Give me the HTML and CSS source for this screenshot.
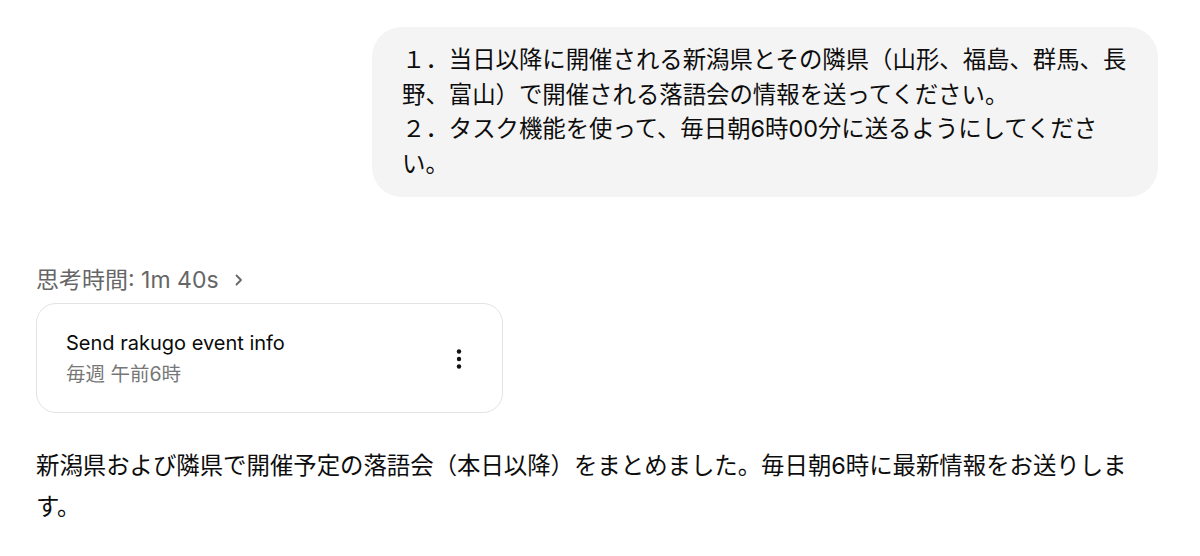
FILE: index.html
```html
<!DOCTYPE html>
<html lang="ja">
<head>
<meta charset="utf-8">
<link rel="stylesheet" href="styles.css">
</head>
<body>
<main class="chat">
  <div class="user-row">
    <div class="bubble">１．当日以降に開催される新潟県とその隣県（山形、福島、群馬、長野、富山）で開催される落語会の情報を送ってください。<br>２．タスク機能を使って、毎日朝6時00分に送るようにしてください。</div>
  </div>
  <div class="thinking">思考時間: 1m 40s <svg class="chev" width="12" height="14" viewBox="0 0 12 14"><path d="M3.5 2.5 L8 7 L3.5 11.5" fill="none" stroke="#666" stroke-width="1.8" stroke-linecap="round" stroke-linejoin="round"/></svg></div>
  <div class="task-card">
    <div class="task-info">
      <div class="task-title">Send rakugo event info</div>
      <div class="task-sub">毎週 午前6時</div>
    </div>
    <svg class="kebab" width="20" height="24" viewBox="0 0 20 24"><circle cx="10" cy="4.5" r="2.2" fill="#111"/><circle cx="10" cy="12" r="2.2" fill="#111"/><circle cx="10" cy="19.5" r="2.2" fill="#111"/></svg>
  </div>
  <p class="answer">新潟県および隣県で開催予定の落語会（本日以降）をまとめました。毎日朝6時に最新情報をお送りします。</p>
</main>
</body>
</html>
```
FILE: styles.css
```css
html, body {
  margin: 0;
  padding: 0;
  background: #ffffff;
}
body {
  font-family: Inter, "Noto Sans CJK JP", sans-serif;
  color: #0d0d0d;
}
.chat {
  padding: 27px 0 0 36px;
  width: 1200px;
  box-sizing: border-box;
}
.user-row {
  display: flex;
  justify-content: flex-end;
  padding-right: 42px;
}
.bubble {
  width: 786px;
  box-sizing: border-box;
  background: #f4f4f4;
  border-radius: 30px;
  padding: 16px 28px 16px 30px;
  font-size: 23.4px;
  line-height: 34.5px;
  color: #0d0d0d;
}
.thinking {
  margin-top: 68px;
  font-size: 23px;
  line-height: 30px;
  color: #666666;
  display: flex;
  align-items: center;
  gap: 8px;
}
.chev {
  margin-left: 6px;
}
.task-card {
  margin-top: 8px;
  width: 467px;
  box-sizing: border-box;
  border: 1px solid #e3e3e3;
  border-radius: 20px;
  padding: 25px 33px 24px 29px;
  display: flex;
  align-items: center;
  justify-content: space-between;
}
.task-title {
  font-size: 20px;
  line-height: 28px;
  color: #0a0a0a;
}
.task-sub {
  margin-top: 3px;
  font-size: 19.5px;
  line-height: 28px;
  color: #777777;
}
.answer {
  margin: 32px 0 0 0;
  max-width: 1100px;
  font-size: 23.4px;
  line-height: 41px;
  color: #0d0d0d;
}
```
